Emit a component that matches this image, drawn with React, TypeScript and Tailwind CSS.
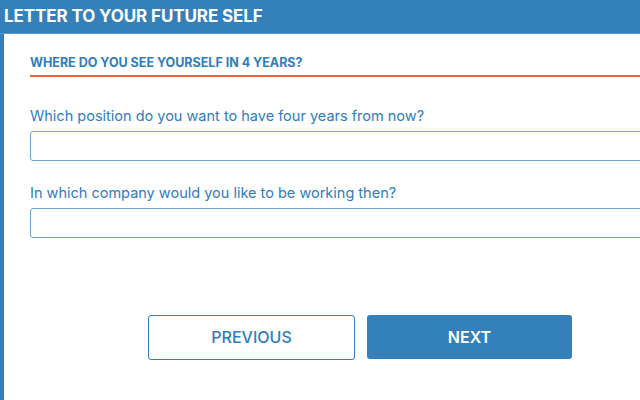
export default function App() {
  return (
    <div className="h-[400px] w-[640px] overflow-hidden bg-white font-['Inter',sans-serif]">
      <div className="flex h-[34px] items-center bg-[#3380bb] pl-[4px] border-b border-[#5a9bd0]">
        <h1 className="text-[17px] font-bold tracking-[-0.1px] text-white">LETTER TO YOUR FUTURE SELF</h1>
      </div>
      <div className="flex h-[366px] border-l-[4px] border-[#3380bb]">
        <div className="flex-1 pl-[26px]">
          <div className="mt-[20px] border-b-2 border-[#e8673f] pb-[2px]">
            <h2 className="text-[12.5px] font-bold text-[#2f7dbd]">WHERE DO YOU SEE YOURSELF IN 4 YEARS?</h2>
          </div>
          <div className="mt-[29px]">
            <label className="block text-[14.5px] leading-[20px] text-[#2f7dbd]">Which position do you want to have four years from now?</label>
            <input className="mt-[5px] h-[30px] w-[640px] rounded-[3px] border border-[#6ea3d0] outline-none" />
          </div>
          <div className="mt-[22px]">
            <label className="block text-[14.5px] leading-[20px] text-[#2f7dbd]">In which company would you like to be working then?</label>
            <input className="mt-[5px] h-[30px] w-[640px] rounded-[3px] border border-[#6ea3d0] outline-none" />
          </div>
          <div className="mt-[77px] flex gap-[12px] pl-[118px]">
            <button className="h-[45px] w-[207px] rounded-[3px] border border-[#3380bb] bg-white text-[16px] font-medium text-[#2f7dbd]">PREVIOUS</button>
            <button className="h-[44px] w-[205px] rounded-[3px] bg-[#3380bb] text-[16px] font-semibold text-white">NEXT</button>
          </div>
        </div>
      </div>
    </div>
  )
}
